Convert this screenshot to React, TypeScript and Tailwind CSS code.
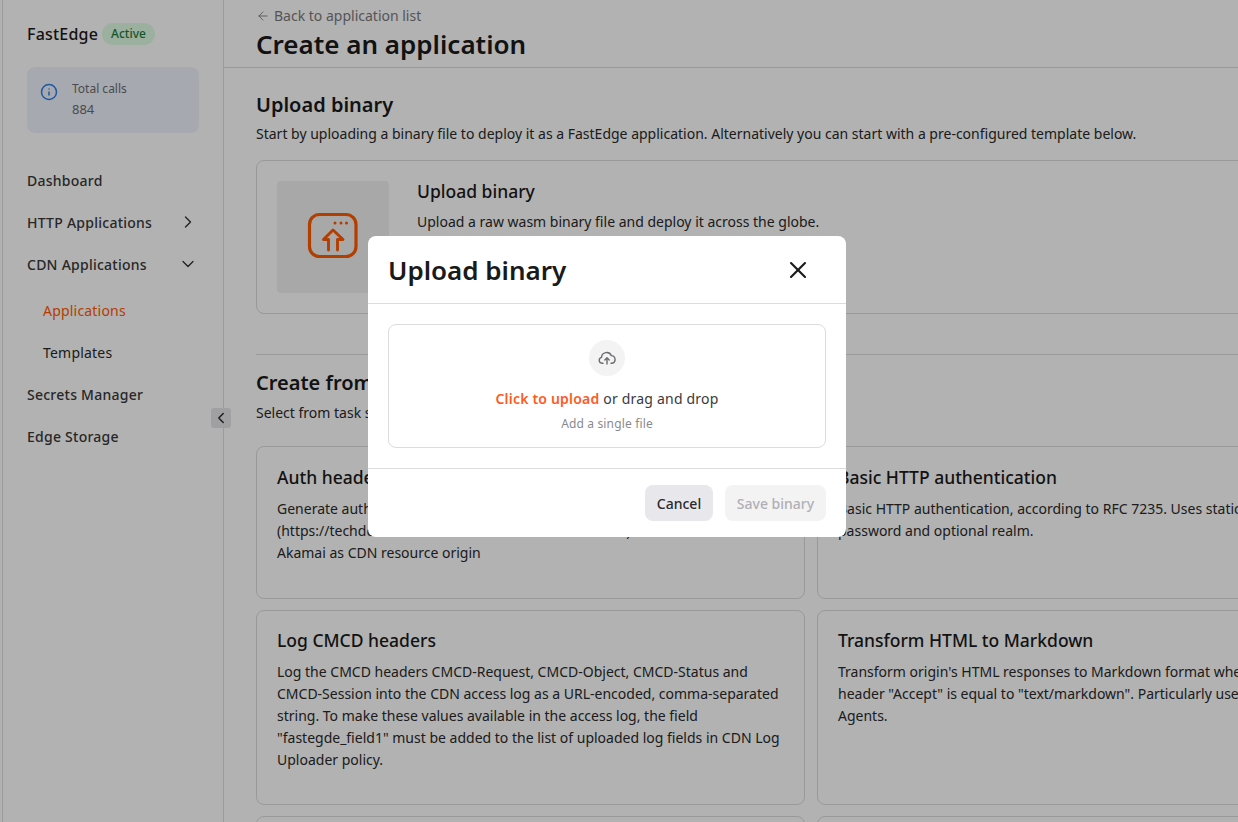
import { ArrowLeft, ChevronDown, ChevronLeft, ChevronRight, Info, X } from "lucide-react"

const font = { fontFamily: '"Noto Sans", sans-serif' }

function NavItem({ label, sub, active, icon }: { label: string; sub?: boolean; active?: boolean; icon?: React.ReactNode }) {
  return (
    <div
      className={`flex h-[42px] items-center justify-between pr-[1px] text-[14px] ${sub ? "pl-4 tracking-[0.2px]" : "font-medium tracking-[0.25px]"} ${active ? "text-[#ff5a00]" : sub ? "text-[#2a2a2a]" : "text-[#38383a]"}`}
    >
      <span>{label}</span>
      {icon}
    </div>
  )
}

function TemplateCard({ title, lines, className }: { title: string; lines: string[]; className: string }) {
  return (
    <div className={`rounded-lg border border-[#dcdcdc] px-5 ${className}`}>
      <h3 className="text-[17.5px] leading-[26px] font-medium text-[#1a1a1a]">{title}</h3>
      <div className="mt-2 text-[14px] leading-[22px] whitespace-nowrap text-[#2a2a2a]">
        {lines.map((line) => (
          <p key={line}>{line}</p>
        ))}
      </div>
    </div>
  )
}

function UploadIcon() {
  return (
    <svg width="52" height="50" viewBox="0 0 52 50" fill="none" stroke="#ff5a00" strokeLinecap="round" strokeLinejoin="round">
      <rect x="2.5" y="2.500" width="46.500" height="42" rx="10" strokeWidth="3.200" />
      <path d="M28 11h.01M34 11h.01M39.500 11h.01" strokeWidth="3" />
      <path d="M21.500 38V27.500h-5L26 18l10 9.500h-5.500V38" strokeWidth="2.900" />
    </svg>
  )
}

// cloud with an up arrow through it, as in the drop zone
function CloudIcon() {
  return (
    <svg width="18" height="14" viewBox="0 0 18 14" fill="none" stroke="#6c6c70" strokeWidth="1.400" strokeLinecap="round" strokeLinejoin="round">
      <path d="M5 12.300H4a3 3 0 0 1-.5-5.900A5.200 5.200 0 0 1 13.400 4.600a3.900 3.900 0 0 1 .6 7.700h-1" />
      <path d="M9 13V7M6.800 9L9 6.800 11.200 9" />
    </svg>
  )
}

export default function App() {
  return (
    <div className="relative flex h-[822px] w-[1238px] overflow-hidden bg-white pl-[2px]" style={font}>
      {/* Sidebar */}
      <aside className="flex w-[222px] shrink-0 flex-col border-x border-[#dedede] px-6 pt-[20px]">
        <div className="flex h-[27px] items-center gap-[4px]">
          <span className="text-[16px] font-medium tracking-[0.2px] text-[#1a1a1a]">FastEdge</span>
          <span className="flex h-[22px] items-center rounded-full bg-[#dffce4] px-[9px] text-[12px] font-medium text-[#1f7a3d]">Active</span>
        </div>
        <div className="mt-[20px] flex h-[66px] items-start gap-[14px] rounded-lg bg-[#eef3fb] pt-[11px] pl-[13px]">
          <Info className="mt-[5px] h-[18px] w-[18px] text-[#2b7fe8]" strokeWidth={2} />
          <div className="text-[12px] leading-[21px] text-[#6c6c70]">
            <div>Total calls</div>
            <div className="text-[13px]">884</div>
          </div>
        </div>
        <nav className="mt-[26px]">
          <NavItem label="Dashboard" />
          <NavItem label="HTTP Applications" icon={<ChevronRight className="h-5 w-5 text-[#333]" strokeWidth={1.6} />} />
          <NavItem label="CDN Applications" icon={<ChevronDown className="h-5 w-5 text-[#333]" strokeWidth={1.6} />} />
          <div className="pt-1">
            <NavItem label="Applications" sub active />
            <NavItem label="Templates" sub />
          </div>
          <NavItem label="Secrets Manager" />
          <NavItem label="Edge Storage" />
        </nav>
      </aside>

      {/* Main */}
      <main className="w-[1174px] shrink-0">
        <header className="h-[68px] border-b border-[#dedede] pt-[5px] pl-8">
          <div className="flex items-center gap-[4px] text-[14px] leading-[22px] text-[#7a7a7e]">
            <ArrowLeft className="h-[14px] w-[14px]" strokeWidth={1.5} />
            <span>Back to application list</span>
          </div>
          <h1 className="text-[26px] leading-[34px] font-semibold text-[#1a1a1a]">Create an application</h1>
        </header>
        <div className="px-8 pt-[22px]">
          <h2 className="text-[20px] leading-[30px] font-semibold text-[#1a1a1a]">Upload binary</h2>
          <p className="mt-[3px] text-[14px] leading-[22px] text-[#2a2a2a]">
            Start by uploading a binary file to deploy it as a FastEdge application. Alternatively you can start with a pre-configured template below.
          </p>
          <div className="mt-[15px] flex h-[154px] gap-7 rounded-lg border border-[#dcdcdc] p-5">
            <div className="flex h-[112px] w-[112px] items-center justify-center rounded bg-[#f1f1f1]">
              <UploadIcon />
            </div>
            <div>
              <h3 className="mt-[-1px] text-[17.5px] leading-[22px] font-medium text-[#1a1a1a]">Upload binary</h3>
              <p className="mt-[9px] text-[14px] leading-[22px] text-[#2a2a2a]">Upload a raw wasm binary file and deploy it across the globe.</p>
            </div>
          </div>
          <div className="mt-10 border-t border-[#dedede] pt-[13px]">
            <h2 className="text-[20px] leading-[30px] font-semibold text-[#1a1a1a]">Create from template</h2>
            <p className="mt-[4px] text-[14px] leading-[22px] text-[#2a2a2a]">Select from task specific templates to get started quickly.</p>
          </div>
          <div className="mt-[22px] grid grid-cols-[549px_549px] gap-x-3 gap-y-[11px]">
            <TemplateCard
              className="h-[153px] pt-[17px]"
              title="Auth header"
              lines={["Generate auth tokens for Akamai", "(https://techdocs.akamai.com/cloud/docs/auth-token) to use", "Akamai as CDN resource origin"]}
            />
            <TemplateCard
              className="h-[153px] pt-[17px]"
              title="Basic HTTP authentication"
              lines={["Basic HTTP authentication, according to RFC 7235. Uses static username,", "password and optional realm."]}
            />
            <TemplateCard
              className="h-[195px] pt-4"
              title="Log CMCD headers"
              lines={[
                "Log the CMCD headers CMCD-Request, CMCD-Object, CMCD-Status and",
                "CMCD-Session into the CDN access log as a URL-encoded, comma-separated",
                "string. To make these values available in the access log, the field",
                '"fastegde_field1" must be added to the list of uploaded log fields in CDN Log',
                "Uploader policy.",
              ]}
            />
            <TemplateCard
              className="h-[195px] pt-4"
              title="Transform HTML to Markdown"
              lines={[
                "Transform origin's HTML responses to Markdown format when the request",
                'header "Accept" is equal to "text/markdown". Particularly useful for AI',
                "Agents.",
              ]}
            />
            <TemplateCard className="h-[153px]" title="" lines={[]} />
            <TemplateCard className="h-[153px]" title="" lines={[]} />
          </div>
        </div>
      </main>

      {/* Overlay and dialog */}
      <div className="absolute inset-0 flex items-start justify-center bg-black/30 pr-6">
        <div className="mt-[236px] w-[478px] rounded-lg bg-white">
          <div className="flex h-[68px] items-center justify-between border-b border-[#dcdcdc] pr-[34px] pl-5">
            <h2 className="mt-[2px] text-[26px] font-semibold text-[#1a1a1a]">Upload binary</h2>
            <X className="h-[28px] w-[28px] text-[#1a1a1a]" strokeWidth={1.800} />
          </div>
          <div className="border-b border-[#dcdcdc] p-5">
            <div className="flex h-[124px] flex-col items-center rounded-lg border border-[#dcdcdc] pt-[15px]">
              <div className="flex h-9 w-9 items-center justify-center rounded-full bg-[#f3f3f4]">
                <CloudIcon />
              </div>
              <p className="mt-[12px] text-[14px] leading-[22px] tracking-[0.2px] text-[#3a3a3c]">
                <span className="font-semibold text-[#ff5a1f]">Click to upload</span> or drag and drop
              </p>
              <p className="mt-[4px] text-[12px] leading-[20px] tracking-[0.15px] text-[#8a8a8e]">Add a single file</p>
            </div>
          </div>
          <div className="flex h-[68px] items-center justify-end gap-3 pr-5">
            <button className="h-9 w-[68px] rounded-lg bg-[#e8e7ec] text-[14px] font-medium text-[#2a2a2a]">Cancel</button>
            <button className="h-9 w-[101px] rounded-lg bg-[#f3f3f4] text-[14px] font-medium text-[#b0afb5]">Save binary</button>
          </div>
        </div>
      </div>

      {/* Sidebar collapse handle sits over the dimmed page */}
      <button className="absolute top-[408px] left-[211px] flex h-5 w-5 items-center justify-center rounded-[3px] bg-[#a0a0a2] text-[#1a1a1a]">
        <ChevronLeft className="h-[18px] w-[18px]" strokeWidth={1.800} />
      </button>
    </div>
  )
}
